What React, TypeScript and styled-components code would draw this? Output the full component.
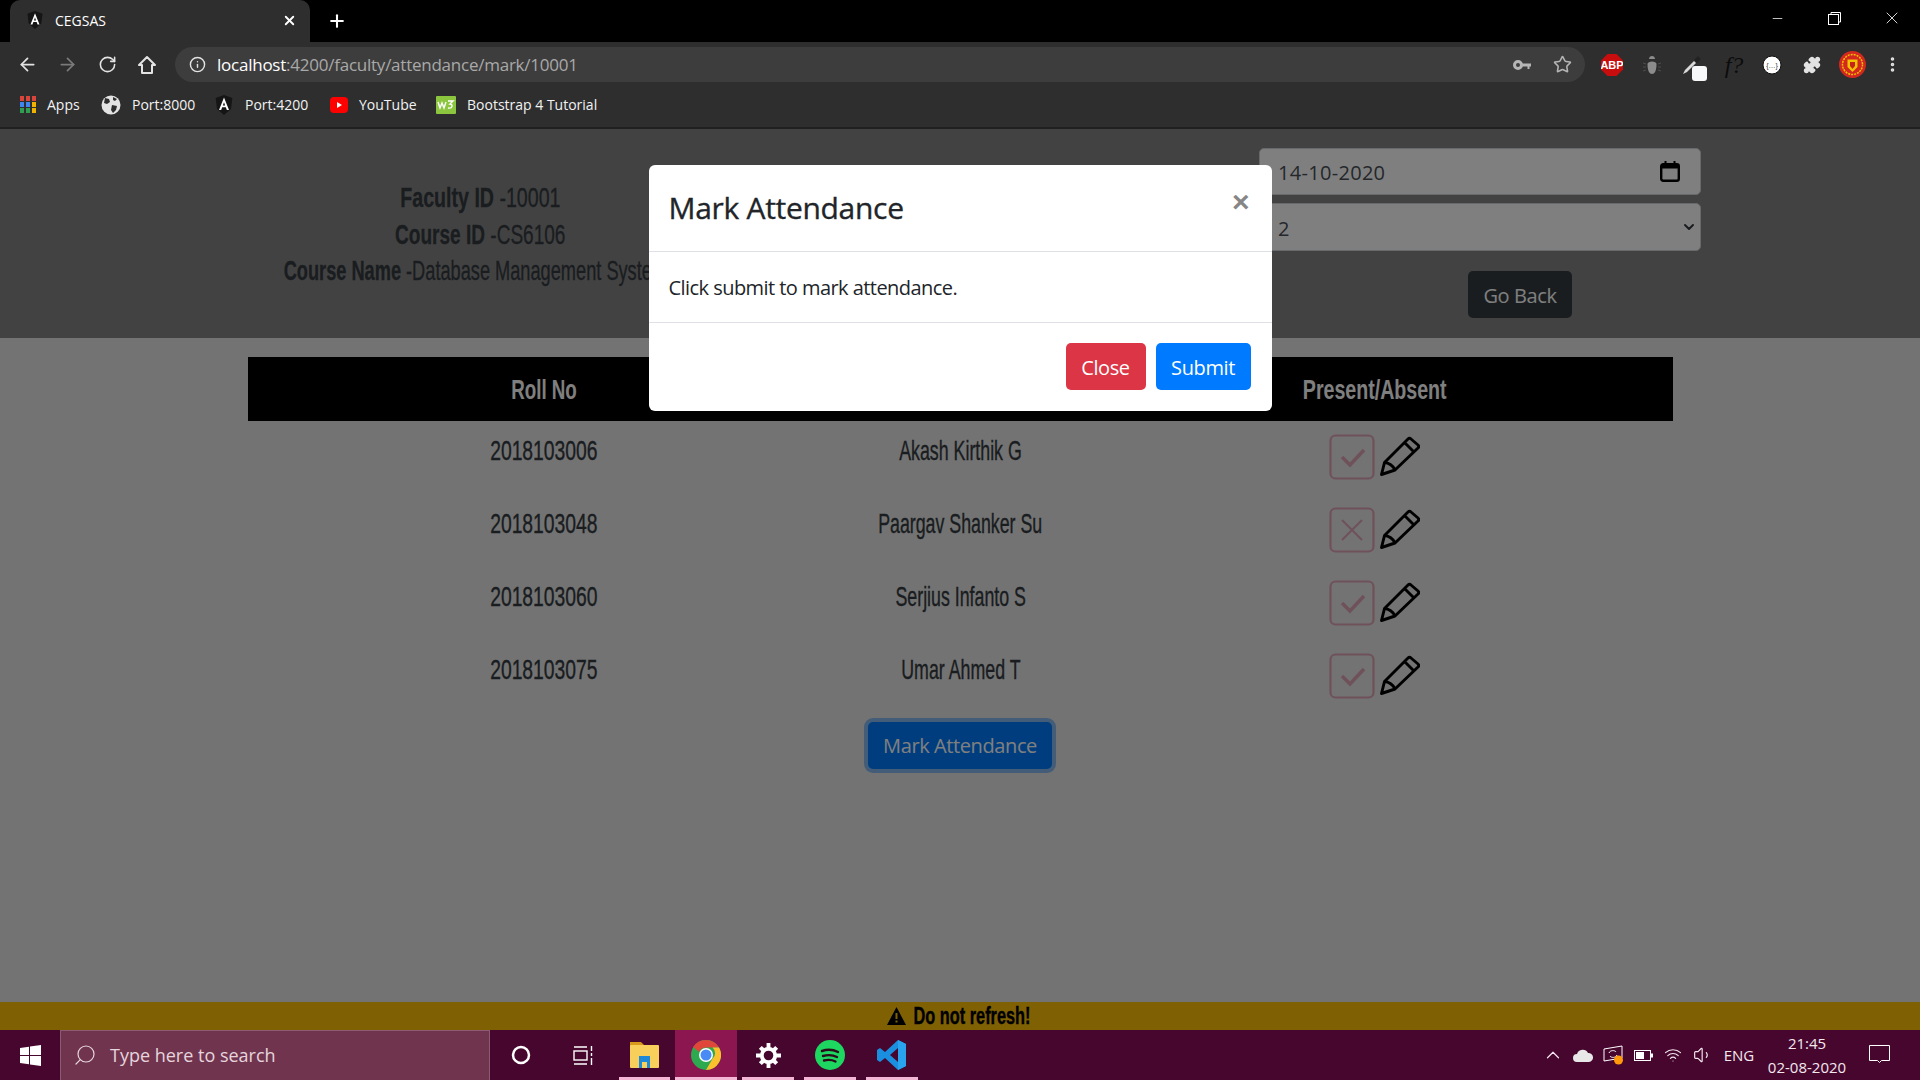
import styled, { createGlobalStyle } from "styled-components";
import { ArrowLeft, ArrowRight, RotateCw, Info, Star, Puzzle, MoreVertical, Plus, X, Minus, ChevronUp, Search, Volume1, Wifi, ChevronDown } from "lucide-react";

const UI_FONT = `"Open Sans", "Noto Sans", sans-serif`;
const CONDENSED_FONT = `"Liberation Sans", sans-serif`;

const GlobalStyle = createGlobalStyle`
  * { box-sizing: border-box; }
  html, body { margin: 0; padding: 0; height: 100%; overflow: hidden; }
  body { font-family: ${UI_FONT}; }
`;

const Screen = styled.div`
  width: 1920px;
  height: 1080px;
  display: flex;
  flex-direction: column;
  overflow: hidden;
`;

/* browser chrome */
const TabStrip = styled.div`
  height: 42px;
  background: #000;
  display: flex;
  align-items: flex-end;
  padding-left: 10px;
  color: #fff;
`;

const Tab = styled.div`
  width: 300px;
  height: 42px;
  background: #2e2e2e;
  border-radius: 10px 10px 0 0;
  display: flex;
  align-items: center;
  padding: 0 13px 2px 16px;
  font-size: 14px;
`;

const TabTitle = styled.span`
  margin-left: 11px;
  flex: 1;
`;

const NewTab = styled.div`
  width: 54px;
  height: 42px;
  display: flex;
  align-items: center;
  justify-content: center;
`;

const WindowControls = styled.div`
  margin-left: auto;
  height: 36px;
  align-self: flex-start;
  display: flex;
  align-items: center;
`;

const WindowButton = styled.div`
  width: 57px;
  display: flex;
  justify-content: center;
`;

const Toolbar = styled.div`
  height: 46px;
  background: #2e2e2e;
  display: flex;
  align-items: center;
  padding: 0 8px 1px 7px;
`;

const ToolSlot = styled.div`
  width: 40px;
  height: 36px;
  flex: none;
  display: flex;
  align-items: center;
  justify-content: center;
  position: relative;
`;

const Omnibox = styled.div`
  width: 1410px;
  height: 35px;
  margin: 0 7px 0 8px;
  flex: none;
  border-radius: 18px;
  background: #3d3d3d;
  display: flex;
  align-items: center;
  padding: 0 10px 0 14px;
  font-size: 17px;
  letter-spacing: -0.24px;
  color: #a9a9a9;
`;

const UrlHost = styled.span`
  color: #fff;
  margin-left: 11px;
`;

const OmniboxEnd = styled.div`
  margin-left: auto;
  display: flex;
  align-items: center;
  gap: 22px;
  padding-right: 3px;
`;

const BookmarksBar = styled.div`
  height: 41px;
  background: #2e2e2e;
  border-bottom: 2px solid #202020;
  display: flex;
  align-items: center;
  padding: 0 0 6px 20px;
  font-size: 14px;
  color: #f2f2f2;
`;

const Bookmark = styled.div<{ $width: number }>`
  width: ${(p) => p.$width}px;
  display: flex;
  align-items: center;
  gap: 11px;
`;

const WhiteDropper = styled.span`
  position: absolute;
  width: 15px;
  height: 15px;
  right: 5px;
  bottom: 2px;
  background: #f7f8fa;
  border-radius: 3px;
`;

/* page */
const Page = styled.div`
  flex: 1;
  position: relative;
  background: #e6e6e6;
  display: flex;
  flex-direction: column;
  font-size: 20px;
  color: #212529;
  overflow: hidden;
`;

const Header = styled.header`
  height: 209px;
  background: #848484;
  display: grid;
  grid-template-columns: 960px 960px;
`;

const FacultyInfo = styled.div`
  padding-top: 51px;
  display: flex;
  flex-direction: column;
  align-items: center;
  white-space: nowrap;
  font-family: ${CONDENSED_FONT};
  font-size: 28px;
  line-height: 36.5px;
  color: #343a40;
  -webkit-text-stroke: 0.3px #343a40;
`;

/* no condensed face is installed, so the heading face is squeezed sideways */
const Narrow = styled.span<{ $x: number }>`
  display: inline-block;
  white-space: nowrap;
  transform: scaleX(${(p) => p.$x});
  transform-origin: center;
`;

const InfoLabel = styled.b`
  font-weight: 700;
`;

const Controls = styled.div`
  padding: 19px 0 0 299px;
  display: flex;
  flex-direction: column;
`;

const Field = styled.div`
  width: 442px;
  height: 47px;
  background: #fff;
  border: 1px solid #ced4da;
  border-radius: 5px;
  margin-bottom: 8px;
  padding: 0 20px 0 18px;
  display: flex;
  align-items: center;
  justify-content: space-between;
  color: #495057;
`;

const FieldValue = styled.span`
  padding-top: 2px;
  letter-spacing: 0.3px;
`;

const SelectField = styled(Field)`
  height: 48px;
  padding-right: 3px;
`;

const GoBack = styled.button`
  width: 104px;
  height: 47px;
  margin: 12px 0 0 209px;
  padding: 2px 0 0;
  background: #343a40;
  color: #fff;
  border: 0;
  border-radius: 5px;
  font: 20px ${UI_FONT};
  letter-spacing: -0.4px;
`;

const Table = styled.section`
  width: 1425px;
  margin: 19px 0 0 248px;
`;

const Row = styled.div<{ $head?: boolean }>`
  display: grid;
  grid-template-columns: 592px 241px 588px;
  height: ${(p) => (p.$head ? 64 : 73)}px;
  background: ${(p) => (p.$head ? "#000" : "transparent")};
  color: ${(p) => (p.$head ? "#fff" : "#343a40")};
  font-family: ${CONDENSED_FONT};
  font-size: 28px;
  font-weight: ${(p) => (p.$head ? 700 : 400)};
  line-height: 30px;
  -webkit-text-stroke: ${(p) => (p.$head ? "0" : "0.35px")};
`;

const Cell = styled.div<{ $head?: boolean }>`
  display: flex;
  justify-content: center;
  white-space: nowrap;
  padding-top: ${(p) => (p.$head ? 18 : 15)}px;
`;

const StatusCell = styled.div`
  padding: 13px 2px 0 0;
  display: flex;
  justify-content: center;
  gap: 5px;
  height: 60px;
`;

const MarkRow = styled.div`
  display: flex;
  justify-content: center;
  margin-top: 9px;
`;

const MarkButton = styled.button`
  width: 184px;
  height: 47px;
  padding: 0;
  background: #007bff;
  border: 0;
  border-radius: 5px;
  color: #fff;
  font: 20px ${UI_FONT};
  letter-spacing: -0.4px;
  box-shadow: 0 0 0 4px rgba(38, 143, 255, 0.5);
`;

const WarningBar = styled.div`
  margin-top: auto;
  height: 28px;
  background: #ffc107;
  display: flex;
  align-items: center;
  justify-content: center;
  gap: 6px;
  font-family: ${CONDENSED_FONT};
  font-size: 24px;
  font-weight: 700;
  color: #000;
`;

const WarningText = styled(Narrow)`
  margin: 0 -26px;
  -webkit-text-stroke: 0.4px #000;
`;

/* modal */
const Backdrop = styled.div`
  position: absolute;
  inset: 0;
  background: rgba(0, 0, 0, 0.5);
  display: flex;
  justify-content: center;
  padding-top: 36px;
`;

const Modal = styled.div`
  width: 623px;
  height: 246px;
  background: #fff;
  border-radius: 6px;
  display: flex;
  flex-direction: column;
`;

const ModalHeader = styled.div`
  height: 87px;
  border-bottom: 1px solid #dee2e6;
  padding: 20px 22px 0 20px;
  display: flex;
  justify-content: space-between;
`;

const ModalTitle = styled.h5`
  margin: 0;
  font-size: 30px;
  line-height: 45px;
  font-weight: 500;
  letter-spacing: -0.3px;
  -webkit-text-stroke: 0.35px #212529;
`;

const CloseMark = styled.span`
  font-family: "Liberation Sans", sans-serif;
  font-size: 30px;
  line-height: 34px;
  font-weight: 700;
  color: #868686;
`;

const ModalBody = styled.div`
  height: 71px;
  border-bottom: 1px solid #dee2e6;
  padding: 21px 20px 0 20px;
  line-height: 30px;
  letter-spacing: -0.55px;
`;

const ModalFooter = styled.div`
  flex: 1;
  padding: 20px 21px 0 0;
  display: flex;
  justify-content: flex-end;
  gap: 10px;
`;

const ModalButton = styled.button<{ $variant: "danger" | "primary" }>`
  height: 47px;
  width: ${(p) => (p.$variant === "danger" ? 80 : 95)}px;
  padding: 2px 0 0;
  border: 0;
  border-radius: 5px;
  background: ${(p) => (p.$variant === "danger" ? "#dc3545" : "#007bff")};
  color: #fff;
  font: 20px ${UI_FONT};
  letter-spacing: -0.4px;
`;

/* taskbar */
const Taskbar = styled.footer`
  height: 50px;
  background: #47062e;
  display: flex;
  align-items: stretch;
  color: #fff;
`;

const StartButton = styled.div`
  width: 60px;
  display: flex;
  align-items: center;
  justify-content: center;
`;

const SearchBox = styled.div`
  width: 430px;
  background: #70344e;
  border: 1px solid #8c5a72;
  border-bottom: 0;
  display: flex;
  align-items: center;
  padding: 0 0 2px 12px;
  gap: 13px;
  color: #e6d5dd;
  font-size: 18px;
`;

const SearchGlyph = styled(Search)`
  transform: scaleX(-1);
`;

const TaskTile = styled.div<{ $open?: boolean; $active?: boolean }>`
  width: 61.8px;
  position: relative;
  display: flex;
  align-items: center;
  justify-content: center;
  background: ${(p) => (p.$active ? "#8b1650" : "transparent")};
  &::after {
    content: "";
    display: ${(p) => (p.$open ? "block" : "none")};
    position: absolute;
    left: ${(p) => (p.$active ? 0 : 5)}px;
    right: ${(p) => (p.$active ? 0 : 5)}px;
    bottom: 0;
    height: 3px;
    background: #f3b6d5;
  }
`;

const Tray = styled.div`
  margin-left: auto;
  display: flex;
  align-items: center;
  font-size: 15px;
  color: #f3e8ee;
`;

const TrayIcon = styled.div`
  width: 30px;
  display: flex;
  justify-content: center;
`;

const TrayLang = styled.div`
  width: 36px;
  text-align: center;
  margin-left: 3px;
`;

const Clock = styled.div`
  width: 100px;
  text-align: center;
  line-height: 24px;
`;

const Notify = styled.div`
  width: 44px;
  display: flex;
  justify-content: center;
  margin: 0 19px 0 0;
`;

/* drawings */
const AngularIcon = ({ size = 18 }: { size?: number }) => (
  <svg width={size} height={size} viewBox="0 0 24 24">
    <path d="M12 0 2 3.6l1.6 13.2L12 24l8.400-7.200L22 3.600z" fill="#151515" />
    <path d="M12 3 6 18h2.600l1.200-3.200h4.400l1.200 3.200H18zm-1.400 9.600L12 8.600l1.400 4z" fill="#fff" />
  </svg>
);

const AppsIcon = () => {
  const colors = ["#d9453a", "#d9453a", "#d9453a", "#3f86f0", "#3f86f0", "#f1b300", "#2f9e4f", "#2f9e4f", "#f1b300"];
  return (
    <svg width="16" height="17" viewBox="0 0 16 17">
      {colors.map((c, i) => (
        <rect key={i} x={(i % 3) * 6} y={Math.floor(i / 3) * 6} width="4" height="5" fill={c} />
      ))}
    </svg>
  );
};

const GlobeIcon = () => (
  <svg width="20" height="20" viewBox="0 0 20 20">
    <circle cx="10" cy="10" r="9.500" fill="#e3e3e3" />
    <path d="M4 3l4 1 1 3-3 2-3-1zM11 10l5 1-1 4-3 3-2-3zM12 2l4 2-2 2-2-1z" fill="#2e2e2e" />
  </svg>
);

const YouTubeIcon = () => (
  <svg width="18" height="16" viewBox="0 0 18 16">
    <rect width="18" height="16" rx="4" fill="#f00" />
    <path d="M7 5l5 3-5 3z" fill="#fff" />
  </svg>
);

const W3Icon = () => (
  <svg width="20" height="18" viewBox="0 0 20 18">
    <rect width="20" height="18" rx="1" fill="#8cc63f" />
    <path d="M2 6l2 6 2-5 2 5 2-6M12 5h5l-3 3c3 0 3 5-2 4" fill="none" stroke="#fff" strokeWidth="1.400" />
  </svg>
);

const HomeIcon = () => (
  <svg width="20" height="20" viewBox="0 0 20 20">
    <path d="M10 2 2 10h3v8h10v-8h3z" fill="none" stroke="#e3e3e3" strokeWidth="2" strokeLinejoin="round" />
  </svg>
);

const KeyIcon = () => (
  <svg width="18" height="12" viewBox="0 0 18 12">
    <circle cx="5" cy="6" r="3.500" fill="none" stroke="#b5b5b5" strokeWidth="3" />
    <path d="M9 4.500h9v3h-1.500V10h-2V7.500H9z" fill="#b5b5b5" />
  </svg>
);

const AbpIcon = () => (
  <svg width="22" height="22" viewBox="0 0 22 22">
    <path d="M6.500 0h9L22 6.500v9L15.500 22h-9L0 15.500v-9z" fill="#c70d0d" />
    <text x="11" y="15" textAnchor="middle" fontSize="11" fontWeight="700" fontFamily="Liberation Sans" fill="#fff">ABP</text>
  </svg>
);

const BugIcon = () => (
  <svg width="20" height="20" viewBox="0 0 20 20">
    <path d="M7 4c0-4 6-4 6 0z" fill="#8c8c8c" />
    <path d="M5.500 9c0-3.500 9-3.500 9 0 0 7-2 10-4.500 10S5.500 16 5.500 9z" fill="#8c8c8c" />
    <path d="M1 8l3 1M1 12h3M1 16l3-1M19 8l-3 1M19 12h-3M19 16l-3-1" stroke="#4d4d4d" />
  </svg>
);

const DropperIcon = () => (
  <svg width="20" height="20" viewBox="0 0 20 20">
    <path d="M1 19l2-4L12 6l2 2-9 9z" fill="#d9d9d9" />
    <path d="M12 5l4-4 3 3-4 4z" fill="#222" />
  </svg>
);

const FunctionMark = styled.span`
  font-family: "Liberation Serif", serif;
  font-style: italic;
  font-size: 24px;
  line-height: 30px;
  color: #0c0c0c;
  margin-left: 4px;
`;

const JsonIcon = () => (
  <svg width="20" height="20" viewBox="0 0 20 20">
    <circle cx="10" cy="10" r="9" fill="#fff" stroke="#111" />
    <text x="10" y="12.500" textAnchor="middle" fontSize="7" fontFamily="Liberation Sans" fill="#333">{"{…}"}</text>
  </svg>
);

const UnitedBadge = () => (
  <svg width="27" height="27" viewBox="0 0 27 27">
    <circle cx="13.500" cy="13.500" r="13.500" fill="#d3281f" />
    <circle cx="13.500" cy="13.500" r="10" fill="none" stroke="#f2c200" strokeWidth="1.500" strokeDasharray="2 1" />
    <path d="M8.500 8.500h10v7.500l-5 5-5-5z" fill="#f2c200" />
    <path d="M11 11h5v4l-2.500 3-2.500-3z" fill="#c5221a" />
  </svg>
);

const CalendarIcon = () => (
  <svg width="20" height="21" viewBox="0 0 20 21">
    <rect x="1.200" y="3.200" width="17.600" height="16.600" rx="2" fill="none" stroke="#000" strokeWidth="2.400" />
    <path d="M1 4h18v3.500H1zM4.500 0h2v3h-2zM13.500 0h2v3h-2z" fill="#000" />
  </svg>
);

const StatusBox = ({ present }: { present: boolean }) => (
  <svg width="46" height="46" viewBox="0 0 46 46">
    <rect x="1.500" y="1.500" width="43" height="43" rx="5" fill="none" stroke="#dfa3b5" strokeWidth="2.200" />
    {present ? (
      <path d="M13 23l8 8 14-15" fill="none" stroke="#dfa3b5" strokeWidth="3.600" />
    ) : (
      <path d="M13 13l20 20M33 13L13 33" fill="none" stroke="#dfa3b5" strokeWidth="2" />
    )}
  </svg>
);

const PencilSvg = styled.svg`
  margin-top: 2px;
`;

const PencilIcon = () => (
  <PencilSvg width="40" height="40" viewBox="0 0 40 40">
    <path
      d="M1.500 38.500l3-12L28 3c1-1 2-1 3 0l7 6c1 1 1 2 0 3L15 34zM4.500 26.500c4 0 9 3.500 10.500 7.500M25 7l9 9"
      fill="none"
      stroke="#000"
      strokeWidth="2.900"
      strokeLinejoin="round"
    />
  </PencilSvg>
);

const WarningIcon = () => (
  <svg width="19" height="18" viewBox="0 0 19 18">
    <path d="M9.500 0 19 18H0z" fill="#000" />
    <path d="M8.500 6h2v6h-2zM8.500 13.500h2v2h-2z" fill="#ffc107" />
  </svg>
);

const WindowsIcon = () => (
  <svg width="21" height="21" viewBox="0 0 21 21">
    <path d="M0 3l9-1.300V10H0zM10 1.500 21 0v10H10zM0 11h9v8.300L0 18zM10 11h11v10l-11-1.500z" fill="#fff" />
  </svg>
);

const CortanaIcon = () => (
  <svg width="20" height="20" viewBox="0 0 20 20">
    <circle cx="10" cy="10" r="8" fill="none" stroke="#fff" strokeWidth="2.500" />
  </svg>
);

const TaskViewIcon = () => (
  <svg width="20" height="21" viewBox="0 0 20 21" fill="none" stroke="#fff" strokeWidth="1.400">
    <rect x="1" y="6" width="13" height="9" />
    <path d="M1 2h13M1 19h13M18.500 1v5M18.500 8v3M18.500 13v7" />
  </svg>
);

const FolderIcon = () => (
  <svg width="29" height="26" viewBox="0 0 29 26">
    <path d="M0 0h11l3 3v3H0z" fill="#d99a1b" />
    <rect y="3" width="29" height="23" rx="1" fill="#f8cf5b" />
    <path d="M9 14h11v12h-3v-6h-5v6H9z" fill="#1e88d9" />
  </svg>
);

const ChromeIcon = () => (
  <svg width="30" height="30" viewBox="0 0 30 30">
    <circle cx="15" cy="15" r="15" fill="#2da94f" />
    <path d="M15 0a15 15 0 0 1 13 7.500H15a7.500 7.500 0 0 0-7 4.500L2.200 7A15 15 0 0 1 15 0z" fill="#e0463a" />
    <path d="M28 7.500A15 15 0 0 1 15 30l6.500-11.200a7.500 7.500 0 0 0 0-11.300z" fill="#fbc02d" />
    <circle cx="15" cy="15" r="7" fill="#fff" />
    <circle cx="15" cy="15" r="5.500" fill="#4a8af4" />
  </svg>
);

const GearIcon = () => (
  <svg width="25" height="25" viewBox="0 0 26 26">
    <circle cx="13" cy="13" r="7" fill="none" stroke="#fff" strokeWidth="4" />
    <path
      d="M11 0h4v5h-4zM11 21h4v5h-4zM0 11h5v4H0zM21 11h5v4h-5zM3 6l3-3 3.500 3.500-3 3zM20 3l3 3-3.500 3.500-3-3zM3 20l3.500-3.500 3 3L6 23zM16.500 19.500l3-3L23 20l-3 3z"
      fill="#fff"
    />
  </svg>
);

const SpotifyIcon = () => (
  <svg width="30" height="30" viewBox="0 0 30 30">
    <circle cx="15" cy="15" r="15" fill="#1ed760" />
    <path
      d="M7 11c6-2 11-1.500 16 1M8 16c5-1.500 10-1 14 1M9 20.500c4-1 8-.800 11.500 1"
      fill="none"
      stroke="#2b0a1a"
      strokeWidth="2.400"
      strokeLinecap="round"
    />
  </svg>
);

const VsCodeIcon = () => (
  <svg width="30" height="30" viewBox="0 0 30 30">
    <path d="M21 0l8 4v22l-8 4-13-12-5 4-3-2v-10l3-2 5 4zm0 8-8 7 8 7z" fill="#1a8fe0" />
    <path d="M21 0l8 4v22l-8 4z" fill="#2aa3ef" />
  </svg>
);

const CloudIcon = () => (
  <svg width="20" height="13" viewBox="0 0 20 13">
    <path d="M4 13a4 4 0 0 1 0-8 6 6 0 0 1 11-1 4.500 4.500 0 0 1 1 9z" fill="#e8e8e8" />
  </svg>
);

const SyncIcon = () => (
  <svg width="21" height="20" viewBox="0 0 21 20">
    <path d="M1 4l18-3v12l-18 3z" fill="none" stroke="#fff" />
    <path d="M6 8c1-3 6-3 7-1M14 10c-1 3-6 3-7 1" fill="none" stroke="#fff" />
    <circle cx="15.500" cy="15" r="4.500" fill="#ff9a0d" />
  </svg>
);

const BatteryIcon = () => (
  <svg width="19" height="11" viewBox="0 0 19 11">
    <rect x=".5" y=".5" width="16" height="10" fill="none" stroke="#fff" />
    <rect x="2" y="2" width="8" height="7" fill="#fff" />
    <rect x="17" y="3.500" width="2" height="4" fill="#fff" />
  </svg>
);

const NotifyIcon = () => (
  <svg width="21" height="20" viewBox="0 0 21 20">
    <path d="M.5.500h20v15h-8l-2 2-2-2h-8z" fill="none" stroke="#fff" />
  </svg>
);

const students = [
  { roll: "2018103006", name: "Akash Kirthik G", present: true },
  { roll: "2018103048", name: "Paargav Shanker Su", present: false },
  { roll: "2018103060", name: "Serjius Infanto S", present: true },
  { roll: "2018103075", name: "Umar Ahmed T", present: true },
];

const rightTools = [<AbpIcon />, <BugIcon />, <DropperIcon />, <FunctionMark>f?</FunctionMark>, <JsonIcon />];

function App() {
  return (
    <Screen>
      <GlobalStyle />
      <TabStrip>
        <Tab>
          <AngularIcon />
          <TabTitle>CEGSAS</TabTitle>
          <X size={15} strokeWidth={3} />
        </Tab>
        <NewTab>
          <Plus size={20} strokeWidth={2.5} />
        </NewTab>
        <WindowControls>
          <WindowButton><Minus size={15} strokeWidth={1.2} /></WindowButton>
          <WindowButton>
            <svg width="13" height="13" viewBox="0 0 13 13" fill="none" stroke="#fff">
              <rect x=".5" y="2.500" width="10" height="10" />
              <path d="M3 2V.5h9.500V10H11" />
            </svg>
          </WindowButton>
          <WindowButton><X size={20} strokeWidth={1} /></WindowButton>
        </WindowControls>
      </TabStrip>
      <Toolbar>
        <ToolSlot><ArrowLeft size={21} color="#e3e3e3" strokeWidth={2} /></ToolSlot>
        <ToolSlot><ArrowRight size={21} color="#7a7a7a" strokeWidth={2} /></ToolSlot>
        <ToolSlot><RotateCw size={19} color="#e3e3e3" strokeWidth={2} /></ToolSlot>
        <ToolSlot><HomeIcon /></ToolSlot>
        <Omnibox>
          <Info size={17} color="#e3e3e3" strokeWidth={2} />
          <UrlHost>localhost</UrlHost>:4200/faculty/attendance/mark/10001
          <OmniboxEnd>
            <KeyIcon />
            <Star size={19} color="#b5b5b5" strokeWidth={2} />
          </OmniboxEnd>
        </Omnibox>
        {rightTools.map((icon, i) => (
          <ToolSlot key={i}>
            {icon}
            {i === 2 && <WhiteDropper />}
          </ToolSlot>
        ))}
        <ToolSlot><Puzzle size={18} color="#e3e3e3" fill="#e3e3e3" /></ToolSlot>
        <ToolSlot><UnitedBadge /></ToolSlot>
        <ToolSlot><MoreVertical size={19} color="#e3e3e3" strokeWidth={2.5} /></ToolSlot>
      </Toolbar>
      <BookmarksBar>
        <Bookmark $width={81}><AppsIcon /><span>Apps</span></Bookmark>
        <Bookmark $width={113}><GlobeIcon /><span>Port:8000</span></Bookmark>
        <Bookmark $width={116}><AngularIcon size={20} /><span>Port:4200</span></Bookmark>
        <Bookmark $width={106}><YouTubeIcon /><span>YouTube</span></Bookmark>
        <Bookmark $width={180}><W3Icon /><span>Bootstrap 4 Tutorial</span></Bookmark>
      </BookmarksBar>

      <Page>
        <Header>
          <FacultyInfo>
            <Narrow $x={0.7}><InfoLabel>Faculty ID</InfoLabel> -10001</Narrow>
            <Narrow $x={0.68}><InfoLabel>Course ID</InfoLabel> -CS6106</Narrow>
            <Narrow $x={0.65}><InfoLabel>Course Name</InfoLabel> -Database Management Systems</Narrow>
          </FacultyInfo>
          <Controls>
            <Field><FieldValue>14-10-2020</FieldValue><CalendarIcon /></Field>
            <SelectField><FieldValue>2</FieldValue><ChevronDown size={16} strokeWidth={3} color="#343a40" /></SelectField>
            <GoBack>Go Back</GoBack>
          </Controls>
        </Header>
        <Table>
          <Row $head>
            <Cell $head><Narrow $x={0.67}>Roll No</Narrow></Cell>
            <Cell $head><Narrow $x={0.67}>Name</Narrow></Cell>
            <Cell $head><Narrow $x={0.7}>Present/Absent</Narrow></Cell>
          </Row>
          {students.map((s) => (
            <Row key={s.roll}>
              <Cell><Narrow $x={0.69}>{s.roll}</Narrow></Cell>
              <Cell><Narrow $x={0.635}>{s.name}</Narrow></Cell>
              <StatusCell>
                <StatusBox present={s.present} />
                <PencilIcon />
              </StatusCell>
            </Row>
          ))}
        </Table>
        <MarkRow>
          <MarkButton>Mark Attendance</MarkButton>
        </MarkRow>
        <WarningBar>
          <WarningIcon />
          <WarningText $x={0.68}>Do not refresh!</WarningText>
        </WarningBar>
        <Backdrop>
          <Modal>
            <ModalHeader>
              <ModalTitle>Mark Attendance</ModalTitle>
              <CloseMark>×</CloseMark>
            </ModalHeader>
            <ModalBody>Click submit to mark attendance.</ModalBody>
            <ModalFooter>
              <ModalButton $variant="danger">Close</ModalButton>
              <ModalButton $variant="primary">Submit</ModalButton>
            </ModalFooter>
          </Modal>
        </Backdrop>
      </Page>

      <Taskbar>
        <StartButton><WindowsIcon /></StartButton>
        <SearchBox>
          <SearchGlyph size={24} strokeWidth={1.2} />
          Type here to search
        </SearchBox>
        <TaskTile><CortanaIcon /></TaskTile>
        <TaskTile><TaskViewIcon /></TaskTile>
        <TaskTile $open><FolderIcon /></TaskTile>
        <TaskTile $open $active><ChromeIcon /></TaskTile>
        <TaskTile $open><GearIcon /></TaskTile>
        <TaskTile $open><SpotifyIcon /></TaskTile>
        <TaskTile $open><VsCodeIcon /></TaskTile>
        <Tray>
          <TrayIcon><ChevronUp size={22} strokeWidth={1.3} /></TrayIcon>
          <TrayIcon><CloudIcon /></TrayIcon>
          <TrayIcon><SyncIcon /></TrayIcon>
          <TrayIcon><BatteryIcon /></TrayIcon>
          <TrayIcon><Wifi size={18} strokeWidth={1.5} /></TrayIcon>
          <TrayIcon><Volume1 size={20} strokeWidth={1.4} /></TrayIcon>
          <TrayLang>ENG</TrayLang>
          <Clock>
            <div>21:45</div>
            <div>02-08-2020</div>
          </Clock>
          <Notify><NotifyIcon /></Notify>
        </Tray>
      </Taskbar>
    </Screen>
  );
}

export default App;
